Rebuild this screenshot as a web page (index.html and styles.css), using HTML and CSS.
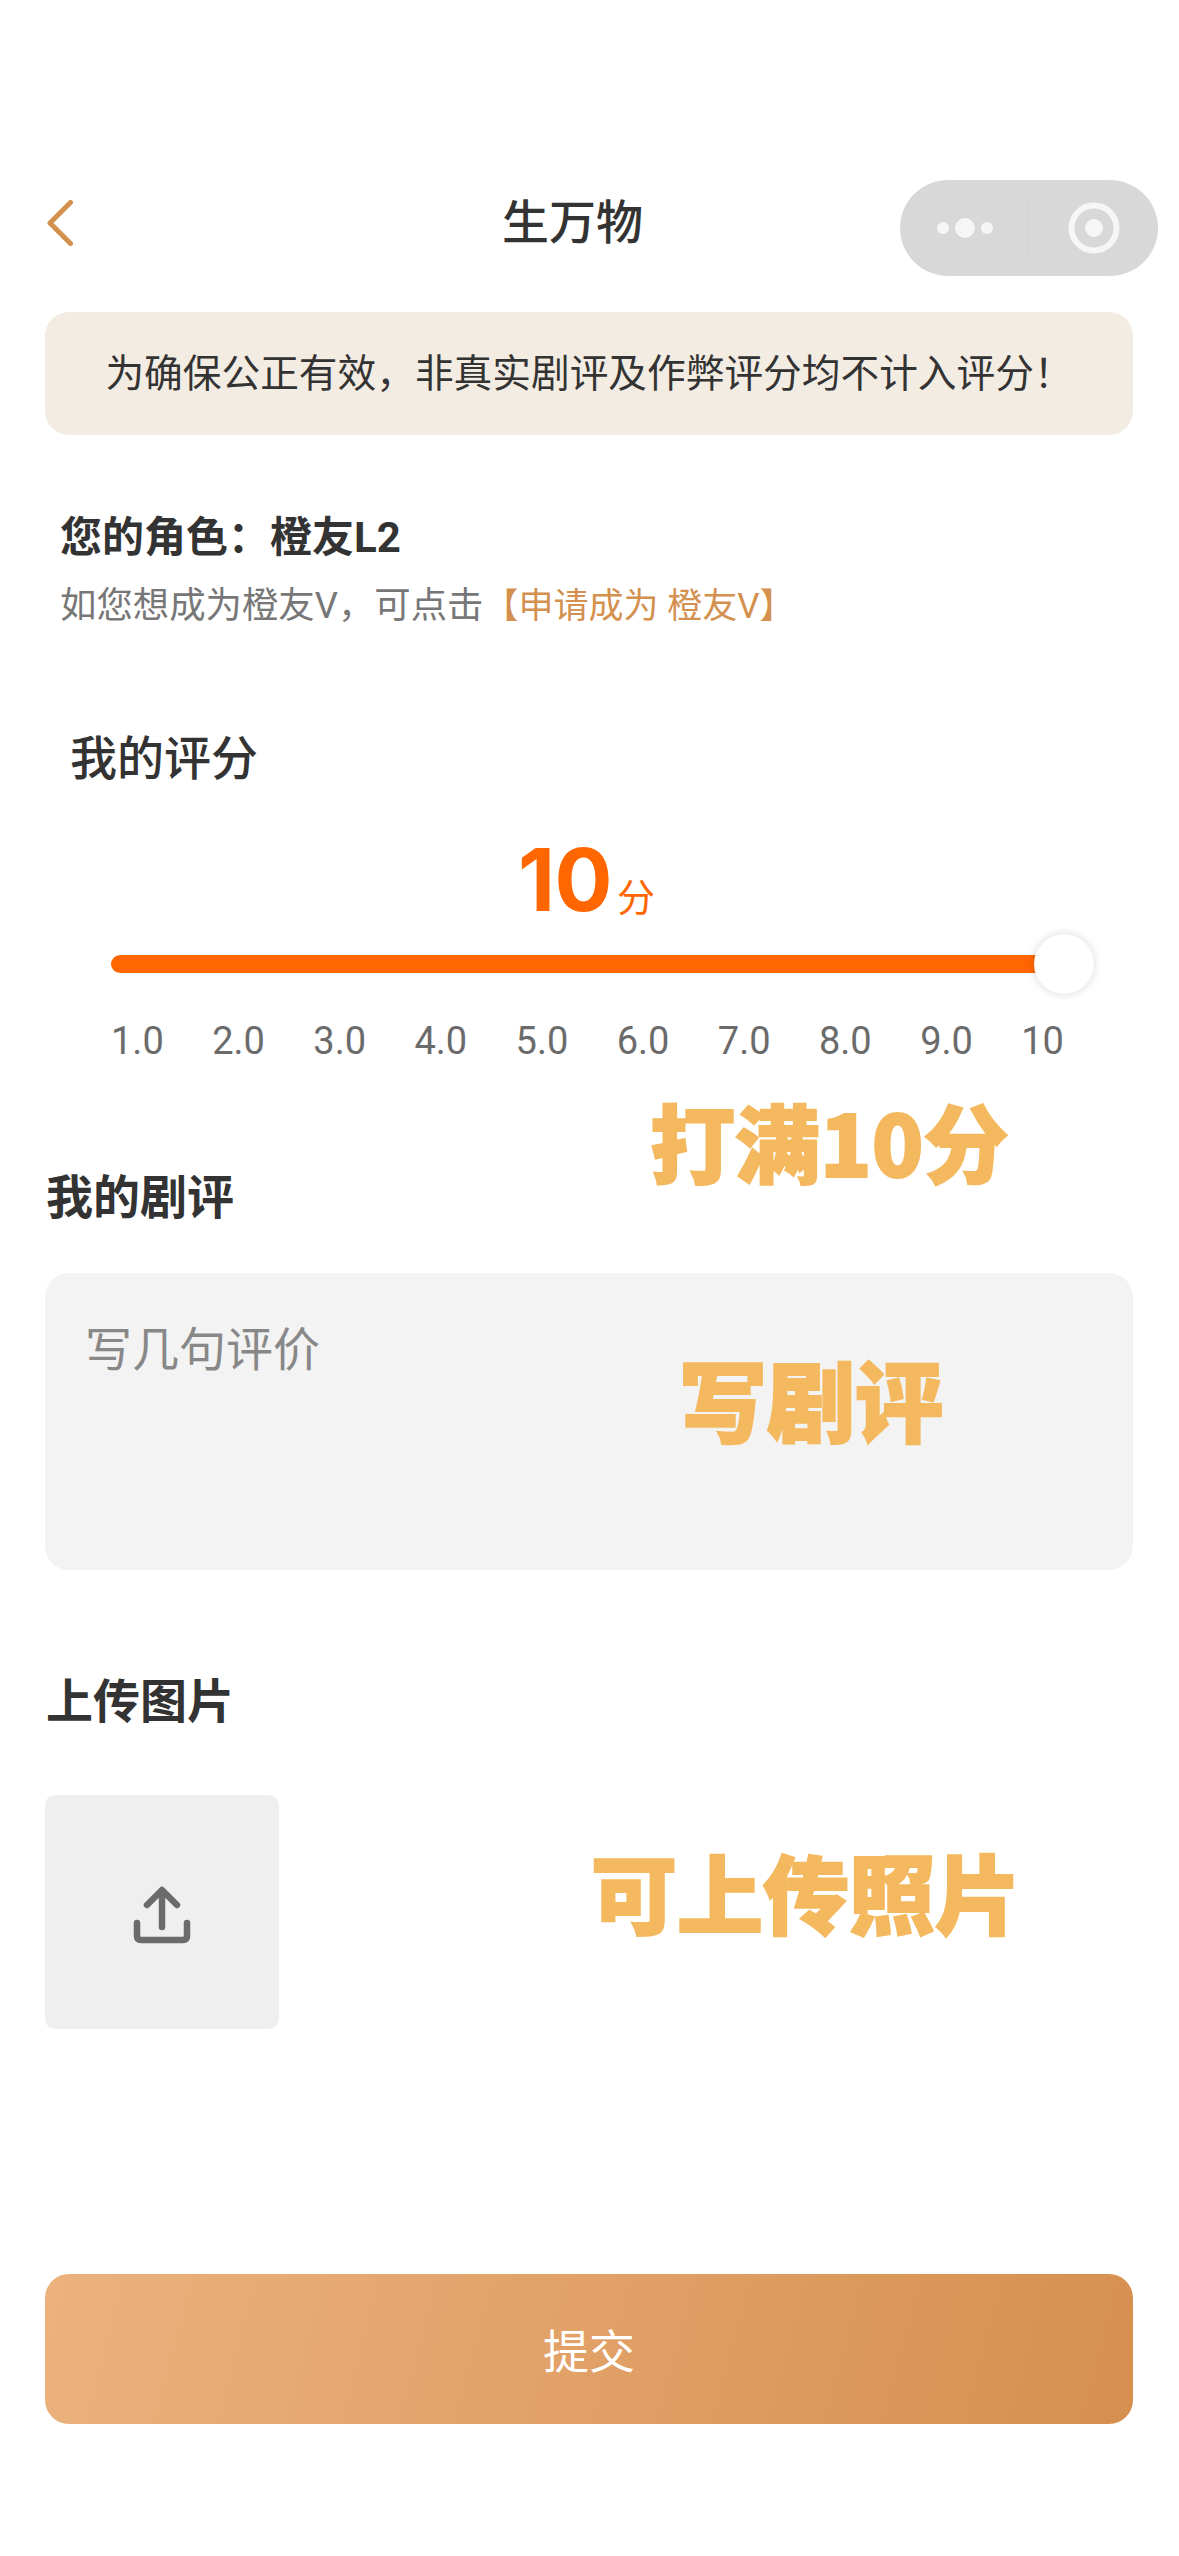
FILE: index.html
```html
<!DOCTYPE html>
<html lang="zh-CN">
<head>
<meta charset="utf-8">
<title>生万物</title>
<link rel="stylesheet" href="styles.css">
</head>
<body>
<main class="page">
  <header class="nav">
    <svg class="back" width="27" height="46" viewBox="0 0 27 46"><path d="M24.5 2.5 L4 23 L24.5 43.500" fill="none" stroke="#d4904f" stroke-width="5" stroke-linecap="round" stroke-linejoin="round"/></svg>
    <h1 class="title">生万物</h1>
    <div class="capsule">
      <svg width="258" height="96" viewBox="0 0 258 96">
        <circle cx="43" cy="48" r="6" fill="#f6f6f6"/>
        <circle cx="65" cy="48" r="10" fill="#f6f6f6"/>
        <circle cx="87" cy="48" r="6" fill="#f6f6f6"/>
        <line x1="129" y1="20" x2="129" y2="76" stroke="#d2d2d2" stroke-width="1"/>
        <circle cx="194" cy="48" r="22.500" fill="none" stroke="#f6f6f6" stroke-width="6"/>
        <circle cx="194" cy="48" r="9" fill="#f6f6f6"/>
      </svg>
    </div>
  </header>

  <p class="notice">为确保公正有效，非真实剧评及作弊评分均不计入评分！</p>

  <section class="role">
    <p class="role-name">您的角色：橙友L2</p>
    <p class="role-tip">如您想成为橙友V，可点击<span class="link">【申请成为 橙友V】</span></p>
  </section>

  <h2 class="rating-title">我的评分</h2>
  <div class="score"><span class="score-num">10</span><span class="score-unit">分</span></div>
  <div class="slider"><div class="track"></div><div class="thumb"></div></div>
  <div class="ticks">
    <span>1.0</span><span>2.0</span><span>3.0</span><span>4.0</span><span>5.0</span><span>6.0</span><span>7.0</span><span>8.0</span><span>9.0</span><span>10</span>
  </div>

  <h2 class="heading heading-review">我的剧评</h2>
  <div class="review"><span class="placeholder">写几句评价</span></div>

  <h2 class="heading heading-upload">上传图片</h2>
  <div class="upload">
    <svg width="64" height="64" viewBox="0 0 64 64"><path d="M32 43 V7 M17 21 L32 6 L47 21 M7 39 V52 Q7 56 11 56 H53 Q57 56 57 52 V39" fill="none" stroke="#6b6b6b" stroke-width="6.500" stroke-linecap="round" stroke-linejoin="round"/></svg>
  </div>

  <button class="submit" type="button">提交</button>

  <span class="note note-score">打满10分</span>
  <span class="note note-review">写剧评</span>
  <span class="note note-photo">可上传照片</span>
</main>
</body>
</html>
```
FILE: styles.css
```css
* { box-sizing: border-box; }
html, body { margin: 0; padding: 0; background: #fff; }
body { font-family: "Roboto", "Noto Sans CJK SC", sans-serif; color: #333; }
h1, h2, p { margin: 0; font-weight: 400; }

.page { position: relative; width: 1179px; height: 2556px; padding-top: 180px; overflow: hidden; }

.nav { display: flex; align-items: center; height: 96px; padding-left: 46px; padding-right: 21px; }
.back { flex: none; margin-bottom: 11px; }
.title { margin-left: 429px; margin-bottom: 10px; font-size: 47px; line-height: 60px; font-weight: 500; color: #333; }
.capsule { display: flex; margin-left: auto; width: 258px; height: 96px; border-radius: 48px; background: #d8d8d8; }

.notice { margin: 36px 46px 0 45px; height: 123px; border-radius: 24px; background: #f3ece2; text-align: center; font-size: 38.7px; line-height: 123px; color: #333; }

.role { margin: 78px 0 0 60px; }
.role-name { font-size: 42px; line-height: 50px; font-weight: 700; color: #333; }
.role-tip { margin-top: 18px; font-size: 36.4px; line-height: 50px; color: #777; }
.link { font-size: 35px; color: #d4904f; }

.rating-title { margin: 97px 0 0 70px; font-size: 47px; line-height: 60px; font-weight: 500; color: #333; }

.score { display: flex; justify-content: center; align-items: baseline; margin: 43px 6px 0 0; height: 96px; color: #ff6600; line-height: 96px; }
.score-num { font-family: "Inter", "Roboto", sans-serif; font-size: 86px; font-weight: 700; letter-spacing: -0.5px; }
.score-unit { margin-left: 5px; font-size: 38px; }

.slider { position: relative; margin: 27px 114px 0 111px; height: 18px; }
.track { height: 18px; border-radius: 9px; background: #ff6600; }
.thumb { position: absolute; right: -29px; top: -21px; width: 60px; height: 60px; border-radius: 50%; background: #fff; box-shadow: 0 0 8px rgba(0, 0, 0, 0.16); }

.ticks { display: flex; justify-content: space-between; margin: 43px 115px 0 111px; font-size: 38px; line-height: 50px; font-weight: 400; color: #6b6b6b; }

.heading { font-size: 47px; line-height: 60px; font-weight: 700; color: #333; margin-left: 46px; }
.heading-review { margin-top: 102px; }
.review { margin: 45px 46px 0 45px; height: 297px; padding: 47px 40px; border-radius: 24px; background: #f3f3f3; }
.placeholder { display: block; font-size: 47px; line-height: 60px; color: #888; }
.heading-upload { margin-top: 102px; }
.upload { display: flex; align-items: center; justify-content: center; margin: 63px 0 0 45px; width: 234px; height: 234px; border-radius: 10px; background: #efefef; }
.upload svg { margin-top: 8px; }

.submit { display: block; margin: 245px 46px 0 45px; padding-bottom: 4px; width: 1088px; height: 150px; border: 0; border-radius: 24px; background: linear-gradient(105deg, #ebb27e, #d68f4f); color: #fff; font-family: inherit; font-size: 46px; }

.note { position: absolute; font-family: "Noto Sans CJK SC", sans-serif; font-weight: 900; line-height: 90px; color: #f4b95f; white-space: nowrap; -webkit-text-stroke: 2px #f4b95f; }
.note-score { left: 650px; top: 1095px; font-size: 85px; }
.note-review { left: 679px; top: 1352px; font-size: 88px; }
.note-photo { left: 591px; top: 1846px; font-size: 86px; }
```
